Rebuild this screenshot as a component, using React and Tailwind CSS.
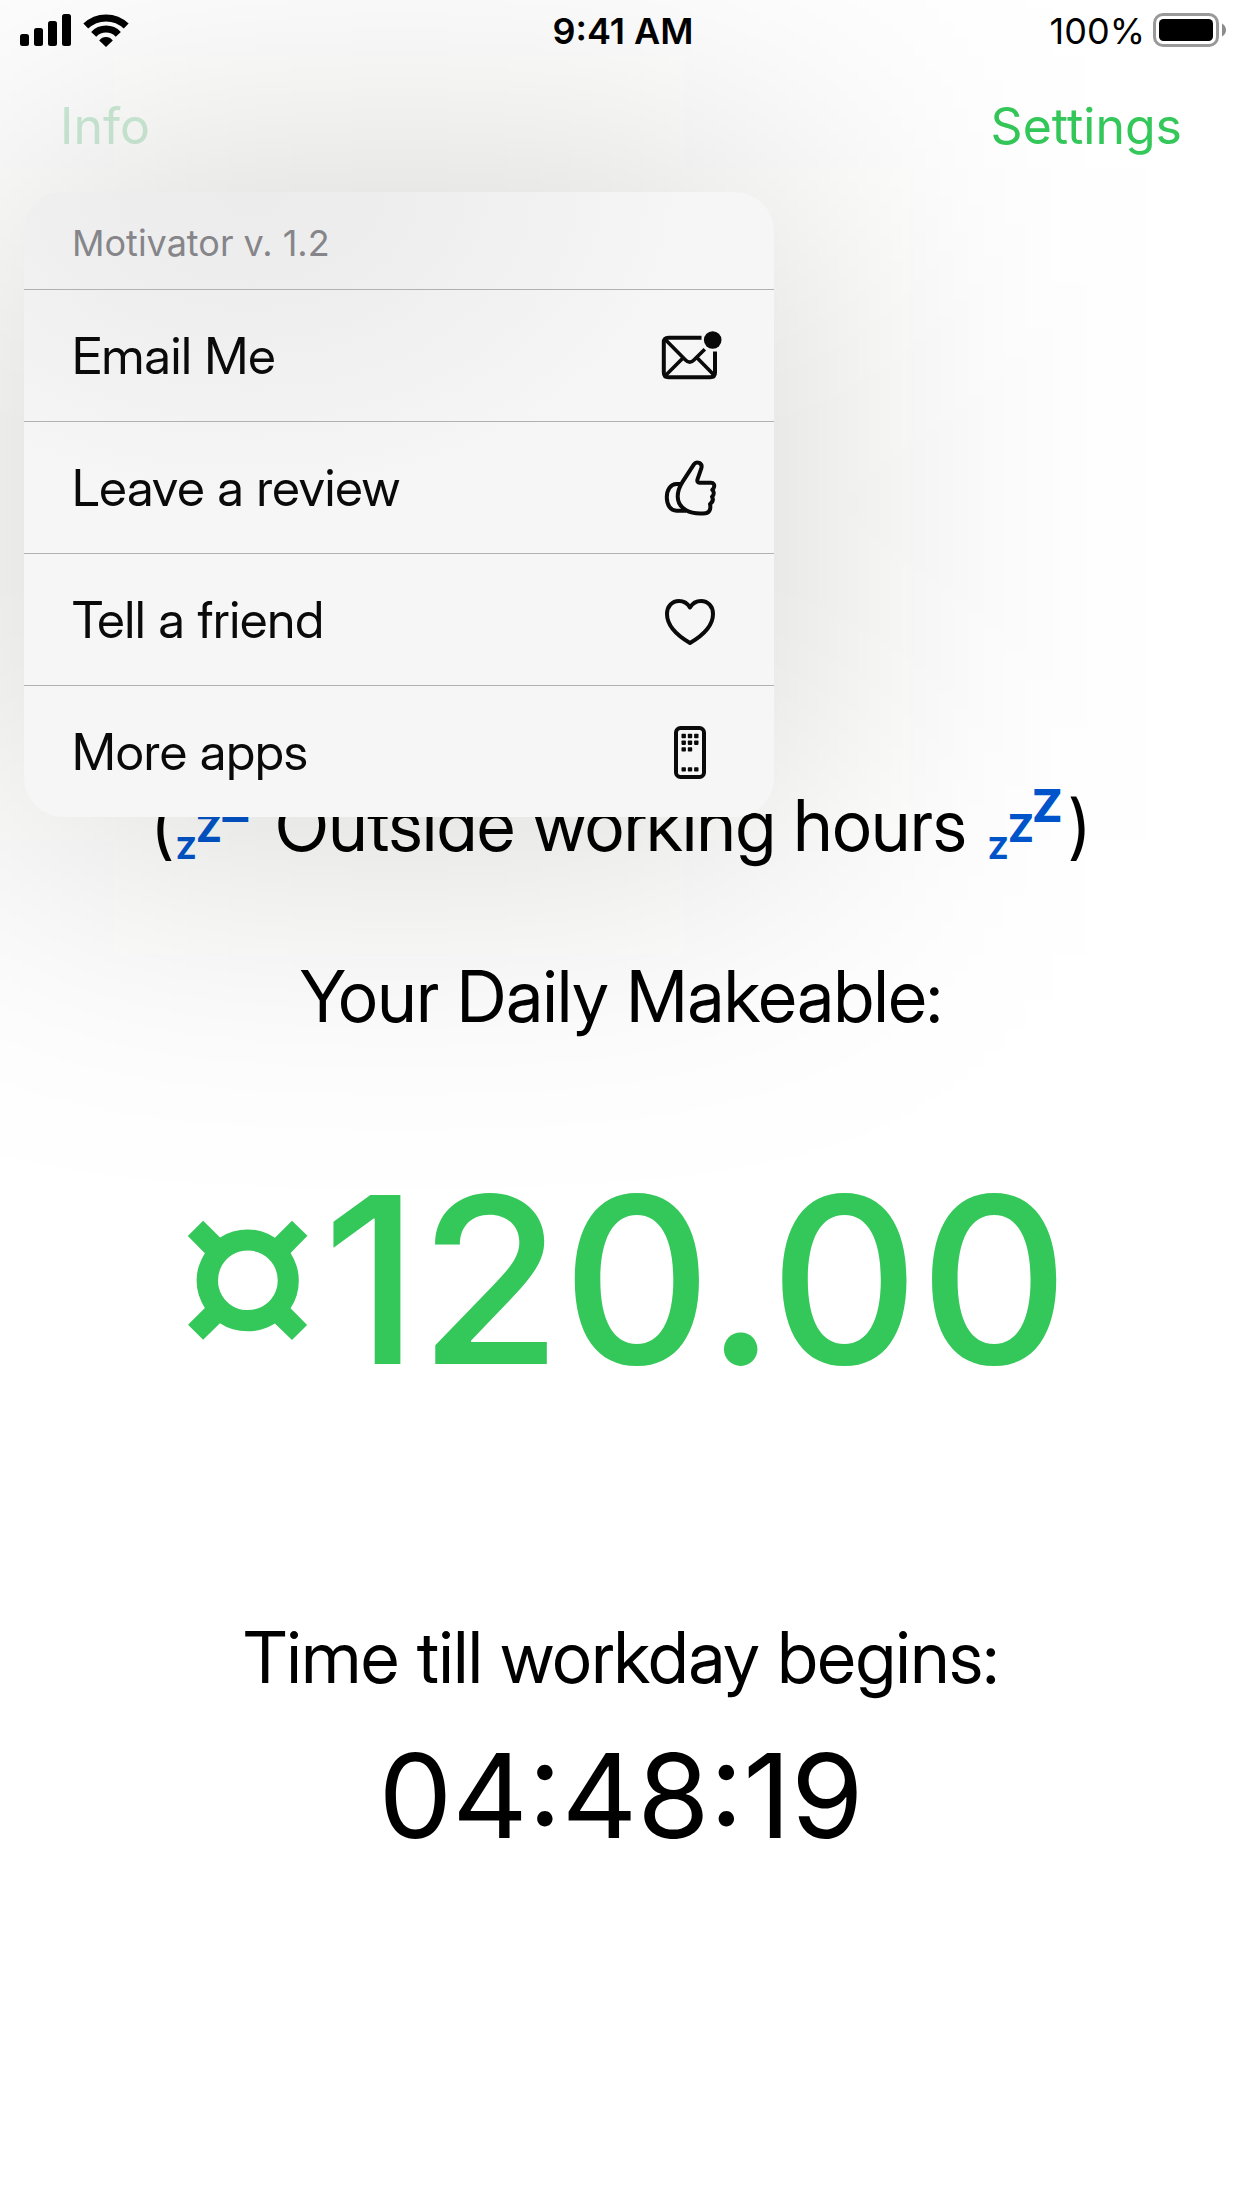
import React from "react";

function SignalIcon() {
  return (
    <svg width="51" height="32" viewBox="0 0 51 32" role="img" aria-label="Cellular signal">
      <rect x="0" y="20" width="9" height="12" rx="2.5" />
      <rect x="14" y="14" width="9" height="18" rx="2.5" />
      <rect x="28" y="7" width="9" height="25" rx="2.5" />
      <rect x="42" y="0" width="9" height="32" rx="2.5" />
    </svg>
  );
}

function WifiIcon() {
  return (
    <svg width="46" height="33" viewBox="0 0 46 33" role="img" aria-label="Wi-Fi">
      <path d="M2.8 12.1A29 29 0 0 1 43.2 12.1" fill="none" stroke="#000" strokeWidth="7" />
      <path d="M10.7 20.3A17 17 0 0 1 35.3 20.3" fill="none" stroke="#000" strokeWidth="7" />
      <path d="M23 33L16.2 26.4C18 24.2 20.4 23 23 23S28 24.2 29.8 26.4Z" />
    </svg>
  );
}

function BatteryIcon() {
  return (
    <svg width="73" height="34" viewBox="0 0 73 34" role="img" aria-label="Battery full">
      <rect x="1.5" y="1.5" width="63" height="31" rx="8.5" fill="#fff" stroke="#999" strokeWidth="3" />
      <rect x="6" y="6" width="54" height="22" rx="4.5" />
      <path d="M69 10.5C71.5 12 73 14.3 73 17S71.5 22 69 23.5Z" fill="#8c8c8c" />
    </svg>
  );
}

function IconFrame({ children }) {
  return (
    <svg
      className="overflow-visible"
      width="60"
      height="60"
      viewBox="0 0 60 60"
      fill="none"
      stroke="currentColor"
      strokeWidth="4"
      strokeLinejoin="round"
      aria-hidden="true"
    >
      {children}
    </svg>
  );
}

function MailIcon() {
  return (
    <IconFrame>
      <path d="M41.5 11.7H8.5Q3.8 11.7 3.8 16.4V46.6Q3.8 51.3 8.5 51.3H50.3Q55 51.3 55 46.6V25.5" />
      <path
        strokeWidth="3.6"
        d="M5.5 13.7L25.5 34Q29.7 38.3 33.9 34L44.8 23.3M5.5 49.5L22.5 32.5M37 31.7L54 49"
      />
      <circle cx="52.7" cy="14" r="8.8" fill="currentColor" stroke="none" />
    </IconFrame>
  );
}

function ThumbIcon() {
  return (
    <IconFrame>
      <path d="M23.5 22.3L33.9 6.3C35.2 4.4 37.4 4.2 39.2 4.9C41.5 6 42 8.3 41.2 10.7L37.5 21.3C36.9 23.3 37.7 24.7 39.5 24.7H51C53.6 24.7 54.7 26.7 54 29.1C53.7 30.4 53 31 52.3 31.9C54.2 33.3 54.5 36.5 52 38.7C53.5 41.2 52.7 44 50 46C50.8 49 50.5 54.7 45.5 55.2C38 55.8 31 55.2 26 52.2C20.5 49 17.7 44.5 17.7 38.5C17.7 30.5 20.5 27 23.5 22.3Z" />
      <path d="M21.5 26H16.5C10.5 26 6.8 32 6.8 39.3C6.8 47 10.5 52.7 16.5 52.7H26" />
    </IconFrame>
  );
}

function HeartIcon() {
  return (
    <IconFrame>
      <path d="M30 17.5C27.5 13.3 23.5 11 19 11C12 11 7 16.5 7 24C7 34.5 15.5 44.5 30 53C44.5 44.5 53 34.5 53 24C53 16.5 48 11 41 11C36.5 11 32.5 13.3 30 17.5Z" />
    </IconFrame>
  );
}

const APP_DOTS = [
  [23.7, 14], [30, 14], [36.3, 14],
  [23.7, 20.7], [30, 20.7], [36.3, 20.7],
  [23.7, 27.4], [30, 27.4],
  [23.7, 47.4], [30, 47.4], [36.3, 47.4],
];

function PhoneIcon() {
  return (
    <IconFrame>
      <rect x="16" y="6" width="28" height="49" rx="4.5" />
      {APP_DOTS.map(([x, y]) => (
        <rect
          key={`${x}-${y}`}
          x={x - 2.2}
          y={y - 2.2}
          width="4.4"
          height="4.4"
          rx="0.8"
          fill="currentColor"
          stroke="none"
        />
      ))}
    </IconFrame>
  );
}

function Snooze() {
  return (
    <svg
      className="inline-block align-baseline overflow-visible"
      width="84"
      height="62"
      viewBox="0 0 84 62"
      fill="#0055cc"
      fontFamily="Inter, sans-serif"
      fontWeight="800"
      role="img"
      aria-label="Zzz"
    >
      <text x="3" y="70" fontSize="30">Z</text>
      <text x="23" y="53" fontSize="38">Z</text>
      <text x="47" y="33" fontSize="45">Z</text>
    </svg>
  );
}

const MENU_ITEMS = [
  { label: "Email Me", Icon: MailIcon },
  { label: "Leave a review", Icon: ThumbIcon },
  { label: "Tell a friend", Icon: HeartIcon },
  { label: "More apps", Icon: PhoneIcon },
];

function InfoMenu() {
  return (
    <div className="absolute left-6 top-full z-10 w-[750px] max-w-[calc(100%-48px)]">
      <div className="pointer-events-none absolute -inset-6 bg-[#0a0a00]/17 blur-[170px]" />
      <div
        role="menu"
        aria-label="Info"
        className="relative overflow-hidden rounded-[39px] bg-[#f5f6f5] bg-[radial-gradient(ellipse_60%_50%_at_30%_0%,#ececec_0%,#eeeeee_35%,#f5f6f5_100%)] text-[#0a0a0a]"
      >
        <p className="flex h-[97px] items-center pl-12 pt-1 text-[36px] leading-[44px] text-[#85858a]">
          Motivator v. 1.2
        </p>
        {MENU_ITEMS.map(({ label, Icon }) => (
          <button
            key={label}
            type="button"
            role="menuitem"
            className="flex h-[132px] w-full items-center justify-between border-t border-[#b0b2b2] pl-12 pr-[54px] text-left font-['Inter_Display','Inter',sans-serif] text-[51px] leading-[60px]"
          >
            {label}
            <Icon />
          </button>
        ))}
      </div>
    </div>
  );
}

export default function App() {
  return (
    <div className="min-h-screen overflow-hidden bg-white font-['Inter',sans-serif] text-black">
      <header className="grid h-[60px] grid-cols-3 items-center pl-5 pr-4 text-[36px] leading-[44px]">
        <div className="flex items-center gap-3">
          <SignalIcon />
          <WifiIcon />
        </div>
        <div className="pt-0.5 text-center font-semibold">9:41 AM</div>
        <div className="flex items-center justify-end gap-2">
          <span className="pt-0.5">100%</span>
          <BatteryIcon />
        </div>
      </header>

      <nav className="relative flex h-[132px] items-center justify-between px-[60px] text-[50px] leading-[60px]">
        <button type="button" aria-haspopup="menu" aria-expanded="true" className="text-[#cdecd8]">
          Info
        </button>
        <button type="button" className="text-[#34c759]">
          Settings
        </button>
        <InfoMenu />
      </nav>

      <main className="flex flex-col items-center pt-[591px] text-center font-['Inter_Display','Inter',sans-serif] text-[71px] leading-[84px]">
        <p className="h-[84px] whitespace-nowrap">
          (<Snooze /> Outside working hours <Snooze />)
        </p>
        <h1 className="mt-[87px]">Your Daily Makeable:</h1>
        <p className="mt-[102px] flex items-start font-['Inter',sans-serif] text-[232px] font-medium leading-[280px] text-[#34c759]">
          <span className="font-['Open_Sans',sans-serif] text-[262px] font-semibold leading-[264px]">¤</span>
          <span>120.00</span>
        </p>
        <h2 className="mt-[195px]">Time till workday begins:</h2>
        <p className="mt-[27px] font-['Inter',sans-serif] text-[117px] leading-[140px]">04:48:19</p>
      </main>
    </div>
  );
}
